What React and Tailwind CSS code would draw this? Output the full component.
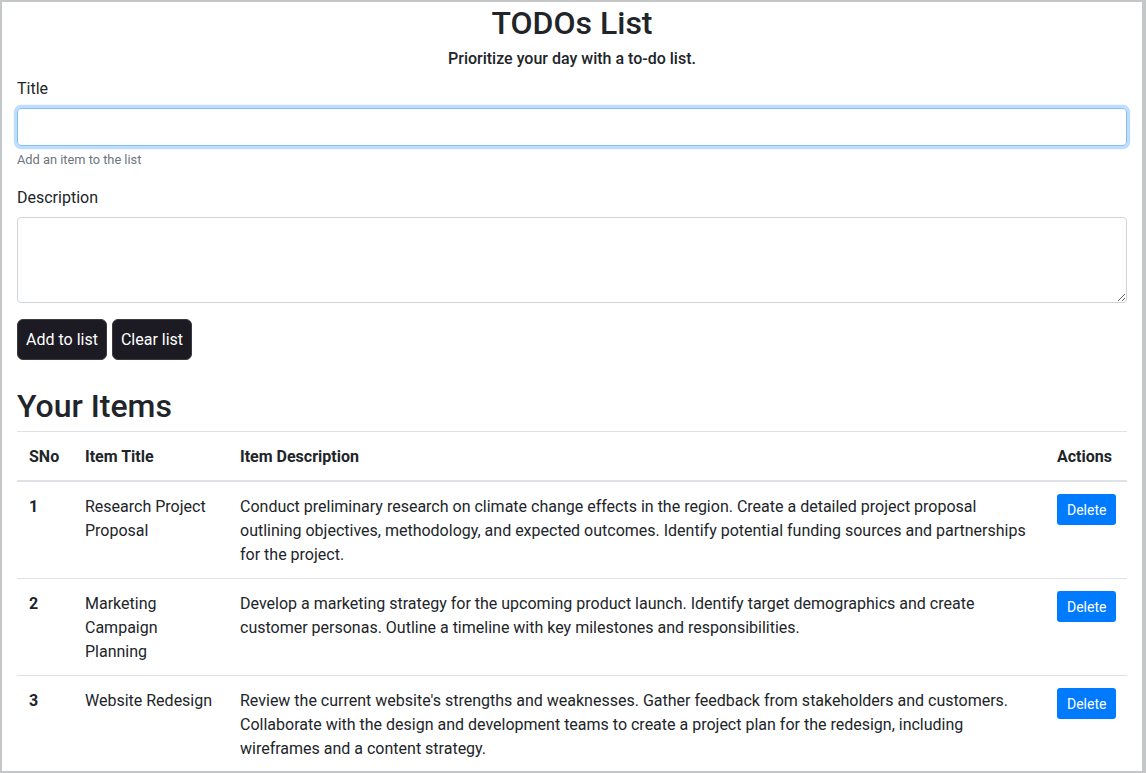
import React, { useState } from 'react';

const initialTodos = [
  {
    sno: 1,
    title: 'Research Project Proposal',
    desc: 'Conduct preliminary research on climate change effects in the region. Create a detailed project proposal outlining objectives, methodology, and expected outcomes. Identify potential funding sources and partnerships for the project.',
  },
  {
    sno: 2,
    title: 'Marketing Campaign Planning',
    desc: 'Develop a marketing strategy for the upcoming product launch. Identify target demographics and create customer personas. Outline a timeline with key milestones and responsibilities.',
  },
  {
    sno: 3,
    title: 'Website Redesign',
    desc: "Review the current website's strengths and weaknesses. Gather feedback from stakeholders and customers. Collaborate with the design and development teams to create a project plan for the redesign, including wireframes and a content strategy.",
  },
];

export default function App() {
  const [todos, setTodos] = useState(initialTodos);
  const [title, setTitle] = useState('');
  const [desc, setDesc] = useState('');

  const addTodo = () => {
    if (!title) return;
    setTodos([...todos, { sno: todos.length + 1, title, desc }]);
    setTitle('');
    setDesc('');
  };

  const deleteTodo = (sno) => {
    setTodos(todos.filter((t) => t.sno !== sno).map((t, i) => ({ ...t, sno: i + 1 })));
  };

  return (
    <div className="h-[773px] overflow-hidden border-t-2 border-l-2 border-r-4 border-b-2 border-[#c4c7c8] bg-white font-['Roboto',sans-serif] text-[16px] leading-6 text-[#212529]">
      <div className="w-[1140px] px-[15px] pt-px">
        <h2 className="text-center text-[32px] font-medium leading-[40px]">TODOs List</h2>
        <p className="mt-1 text-center font-medium">Prioritize your day with a to-do list.</p>

        <div className="mt-[5px] mb-4">
          <label htmlFor="title" className="mb-[7px] block pt-px">Title</label>
          <input
            id="title"
            type="text"
            autoFocus
            value={title}
            onChange={(e) => setTitle(e.target.value)}
            className="block h-[38px] w-full rounded border border-[#80bdff] px-3 text-[#495057] shadow-[0_0_0_3.2px_rgba(0,123,255,0.25)] outline-none"
          />
          <small className="mt-1 block text-[12.8px] leading-[19px] text-[#6c757d]">Add an item to the list</small>
        </div>

        <div className="mb-4">
          <label htmlFor="desc" className="mb-[7px] block pt-px">Description</label>
          <textarea
            id="desc"
            rows="3"
            value={desc}
            onChange={(e) => setDesc(e.target.value)}
            className="block h-[86px] w-full rounded border border-[#ced4da] px-3 py-1.5 text-[#495057] outline-none"
          />
        </div>

        <div className="flex gap-[5px]">
          <button
            onClick={addTodo}
            className="h-[41px] rounded-md border border-[#3b3a40] bg-[#1c1a22] px-2 pt-px text-white"
          >
            Add to list
          </button>
          <button
            onClick={() => setTodos([])}
            className="h-[41px] rounded-md border border-[#3b3a40] bg-[#1c1a22] px-2 pt-px text-white"
          >
            Clear list
          </button>
        </div>

        <h2 className="mt-[27px] mb-[6px] text-[32px] font-medium leading-[38px]">Your Items</h2>

        <table className="w-full table-fixed border-collapse text-left">
          <thead>
            <tr>
              <th className="w-[56px] border-t border-b-2 border-[#dee2e6] px-3 pt-[13px] pb-[11px] font-bold">SNo</th>
              <th className="w-[155px] border-t border-b-2 border-[#dee2e6] px-3 pt-[13px] pb-[11px] font-bold">Item Title</th>
              <th className="border-t border-b-2 border-[#dee2e6] px-3 pt-[13px] pb-[11px] font-bold">Item Description</th>
              <th className="w-[82px] border-t border-b-2 border-[#dee2e6] px-3 pt-[13px] pb-[11px] font-bold">Actions</th>
            </tr>
          </thead>
          <tbody>
            {todos.map((todo) => (
              <tr key={todo.sno}>
                <td className="border-t border-[#dee2e6] px-3 pt-[13px] pb-[11px] align-top font-bold">{todo.sno}</td>
                <td className="border-t border-[#dee2e6] px-3 pt-[13px] pb-[11px] align-top">{todo.title}</td>
                <td className="border-t border-[#dee2e6] px-3 pt-[13px] pb-[11px] align-top">{todo.desc}</td>
                <td className="border-t border-[#dee2e6] px-3 pt-[13px] pb-[11px] align-top">
                  <button
                    onClick={() => deleteTodo(todo.sno)}
                    className="-mt-px h-[31px] rounded-[3px] bg-[#007bff] px-[10px] text-[14px] text-white"
                  >
                    Delete
                  </button>
                </td>
              </tr>
            ))}
          </tbody>
        </table>
      </div>
    </div>
  );
}
